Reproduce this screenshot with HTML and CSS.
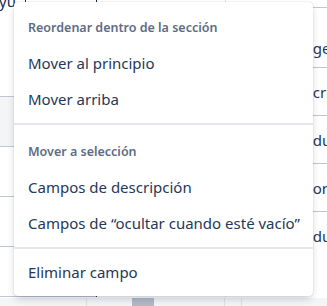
FILE: index.html
```html
<!DOCTYPE html>
<html lang="es">
<head>
<meta charset="utf-8">
<link rel="stylesheet" href="styles.css">
</head>
<body>
<div class="page">
  <div class="col col-left">
    <div class="lead"><span class="cut">yu</span><i class="caret"></i></div>
    <div class="lrow lrow-hl"></div>
    <div class="lrow"></div>
    <div class="lrow"></div>
    <div class="lrow"></div>
    <div class="lrow lrow-last"></div>
  </div>
  <div class="col col-mid"></div>
  <div class="col col-right">
    <div class="rtop"></div>
    <div class="rhead">Campo de gerente</div>
    <div class="rrow">Campo de criterios</div>
    <div class="rrow">Campo de duración</div>
    <div class="rrow">Campo de origen</div>
    <div class="rrow">Campo de duplicados</div>
  </div>
  <div class="bottom">
    <div class="bcell b1"></div>
    <div class="bcell b2"><span class="thumb"></span></div>
    <div class="bcell b3"></div>
    <div class="bcell b4"></div>
  </div>
</div>

<div class="menu" role="menu">
  <div class="group group-first">
    <div class="heading">Reordenar dentro de la sección</div>
    <div class="item" role="menuitem">Mover al principio</div>
    <div class="item" role="menuitem">Mover arriba</div>
  </div>
  <div class="group group-second">
    <div class="heading">Mover a selección</div>
    <div class="item" role="menuitem">Campos de descripción</div>
    <div class="item" role="menuitem">Campos de “ocultar cuando esté vacío”</div>
  </div>
  <div class="group group-last">
    <div class="item" role="menuitem">Eliminar campo</div>
  </div>
</div>
</body>
</html>
```
FILE: styles.css
```css
* { box-sizing: border-box; }

html, body {
  margin: 0;
  padding: 0;
}

body {
  width: 327px;
  height: 306px;
  overflow: hidden;
  position: relative;
  background: #ffffff;
  font-family: "Noto Sans", "Open Sans", sans-serif;
  color: #172b4d;
}

/* ---------- background table ---------- */
.page {
  display: grid;
  grid-template-columns: 97px 128px 102px;
  grid-template-rows: 297px 9px;
  width: 327px;
  height: 306px;
}

.col {
  overflow: hidden;
}

.col-left {
  display: flex;
  flex-direction: column;
  border-right: 1px solid #172b4d;
}

.lead {
  height: 96px;
  flex: none;
  display: flex;
  align-items: flex-start;
}

.cut {
  font-size: 15px;
  line-height: 15px;
  margin-top: -6px;
  margin-left: -1px;
  color: #172b4d;
}

.caret {
  display: block;
  width: 1px;
  height: 4px;
  margin-left: 9px;
  background: #172b4d;
}

.lrow {
  height: 50px;
  flex: none;
  border-top: 1px solid #c1c7d0;
}

.lrow-hl {
  background: #f4f5f7;
}

.lrow-last {
  height: 1px;
}

.col-mid {
  background: #ffffff;
}

.col-right {
  display: flex;
  flex-direction: column;
  border-left: 1px solid #dfe1e6;
}

.rtop {
  height: 7px;
  flex: none;
}

.rhead,
.rrow {
  flex: none;
  display: flex;
  align-items: center;
  white-space: nowrap;
  font-size: 15px;
  padding-left: 11px;
  color: #253858;
  border-top: 1px solid #c1c7d0;
}

.rhead {
  height: 60px;
  align-items: flex-start;
  padding-top: 30px;
  line-height: 20px;
}

.rrow {
  height: 48px;
}

.bottom {
  grid-column: 1 / 4;
  display: flex;
  background: #f4f5f7;
  margin-top: 1px;
}

.bcell {
  height: 100%;
  flex: none;
}

.b1 { width: 87px; border-right: 1px solid #dfe1e6; }
.b2 { width: 138px; border-right: 1px solid #dfe1e6; display: flex; padding-left: 45px; }
.b3 { width: 17px; border-right: 1px solid #dfe1e6; }
.b4 { flex: 1; }

.thumb {
  display: block;
  width: 22px;
  height: 100%;
  background: #b3bac5;
}

/* ---------- overlay menu ---------- */
.menu {
  position: absolute;
  top: 2px;
  left: 14px;
  width: 299px;
  background: #ffffff;
  border-radius: 4px;
  box-shadow: 0 4px 8px -2px rgba(9, 30, 66, 0.25), 0 0 1px rgba(9, 30, 66, 0.31);
}

.group {
  padding: 6px 0;
}

.group-first {
  padding-top: 7px;
}

.group-second {
  border-top: 2px solid #e4e6ea;
  padding-top: 8px;
}

.group-last {
  border-top: 2px solid #e4e6ea;
  padding-top: 5px;
}

.heading {
  height: 36px;
  display: flex;
  align-items: center;
  padding: 0 14px;
  font-size: 12.5px;
  font-weight: 600;
  color: #5e6c84;
  white-space: nowrap;
}

.item {
  height: 36px;
  display: flex;
  align-items: center;
  padding: 0 14px;
  font-size: 15px;
  color: #253858;
  white-space: nowrap;
}
```
